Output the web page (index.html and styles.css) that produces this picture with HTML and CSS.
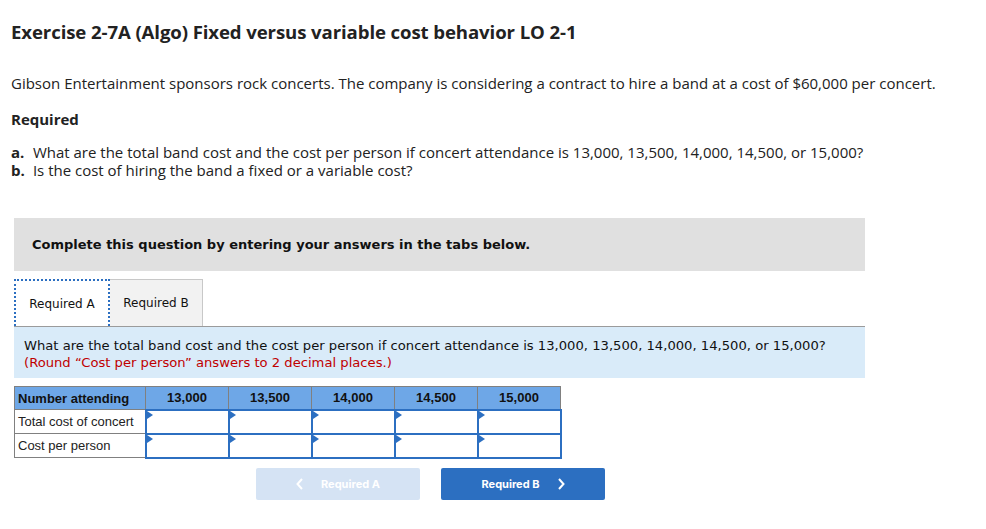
FILE: index.html
```html
<!DOCTYPE html>
<html>
<head>
<meta charset="utf-8">
<link rel="stylesheet" href="styles.css">
</head>
<body>
<div class="page">
  <h1 class="title">Exercise 2-7A (Algo) Fixed versus variable cost behavior LO 2-1</h1>
  <p class="intro">Gibson Entertainment sponsors rock concerts. The company is considering a contract to hire a band at a cost of $60,000 per concert.</p>
  <p class="req">Required</p>
  <ol class="parts">
    <li><b>a.</b> What are the total band cost and the cost per person if concert attendance is 13,000, 13,500, 14,000, 14,500, or 15,000?</li>
    <li><b>b.</b> Is the cost of hiring the band a fixed or a variable cost?</li>
  </ol>

  <div class="widget">
    <div class="banner">Complete this question by entering your answers in the tabs below.</div>
    <div class="tabs">
      <div class="tab active">Required A</div>
      <div class="tab">Required B</div>
    </div>
    <div class="question">
      What are the total band cost and the cost per person if concert attendance is 13,000, 13,500, 14,000, 14,500, or 15,000?<br>
      <span class="note">(Round “Cost per person” answers to 2 decimal places.)</span>
    </div>

    <table class="grid">
      <tr class="head">
        <th class="label">Number attending</th>
        <th>13,000</th><th>13,500</th><th>14,000</th><th>14,500</th><th>15,000</th>
      </tr>
      <tr>
        <td class="label">Total cost of concert</td>
        <td class="cell"><span class="flag"></span></td>
        <td class="cell"><span class="flag"></span></td>
        <td class="cell"><span class="flag"></span></td>
        <td class="cell"><span class="flag"></span></td>
        <td class="cell"><span class="flag"></span></td>
      </tr>
      <tr>
        <td class="label">Cost per person</td>
        <td class="cell"><span class="flag"></span></td>
        <td class="cell"><span class="flag"></span></td>
        <td class="cell"><span class="flag"></span></td>
        <td class="cell"><span class="flag"></span></td>
        <td class="cell"><span class="flag"></span></td>
      </tr>
    </table>

    <div class="nav">
      <button class="btn prev"><svg class="chev l" width="8" height="12" viewBox="0 0 8 12"><path d="M6 1 L1.5 6 L6 11" fill="none" stroke="#fff" stroke-width="2"/></svg>Required A</button>
      <button class="btn next">Required B<svg class="chev r" width="8" height="12" viewBox="0 0 8 12"><path d="M2 1 L6.5 6 L2 11" fill="none" stroke="#fff" stroke-width="2"/></svg></button>
    </div>
  </div>
</div>
</body>
</html>
```

FILE: styles.css
```css
* { box-sizing: border-box; }
body { margin: 0; background: #fff; color: #222; font-family: "Open Sans", "Liberation Sans", sans-serif; }
.page { padding: 20px 0 0 11px; }
.title { margin: 0; font-size: 18.6px; font-weight: 700; line-height: 24px; color: #222; letter-spacing: -0.1px; }
.intro { margin: 29px 0 0; font-size: 15px; line-height: 20px; }
.req { margin: 16px 0 0; font-size: 15px; font-weight: 700; line-height: 20px; }
.parts { list-style: none; margin: 14px 0 0; padding: 0; font-size: 15px; line-height: 18px; }
.parts li { margin-left: -11px; padding-left: 11px; }
.parts b { display: inline-block; width: 18px; }
.widget { margin-top: 39px; margin-left: 3px; width: 851px; font-family: "DejaVu Sans", Verdana, sans-serif; }
.banner { background: #e0e0e0; height: 53px; padding: 0 18px; display: flex; align-items: center; font-weight: 700; font-size: 13px; color: #111; }
.tabs { display: flex; margin-top: 8px; height: 47px; }
.tab { display: flex; align-items: center; justify-content: center; font-size: 12px; color: #111; }
.tab.active { width: 96px; border: 2px dotted #2c6fc1; border-bottom: none; background: #fff; }
.tab:not(.active) { width: 93px; background: #f2f2f2; border: 1px solid #c8c8c8; border-bottom: none; border-left: none; }
.question { background: #d9ebf9; border-top: 1px solid #9b9b9b; padding: 10px 10px 8px; font-size: 13.15px; line-height: 17px; color: #111; height: 52px; }
.note { color: #c00000; }
.grid { margin-top: 8px; border-collapse: collapse; font-family: "Liberation Sans", Arial, sans-serif; font-size: 13px; }
.grid th, .grid td { border: 1px solid #808080; padding: 0; height: 24px; }
.grid th { background: #6ea7e7; color: #111; font-weight: 700; width: 83px; text-align: center; height: 23px; }
.grid .label { width: 131px; text-align: left; padding-left: 3px; }
.grid td.label { background: #fff; }
.grid td.cell { position: relative; border: 2px solid #2c6fc1; }
.flag { position: absolute; left: 0; top: 0; width: 0; height: 0; border-top: 4px solid transparent; border-bottom: 4px solid transparent; border-left: 6px solid #2c6fc1; }
.nav { display: flex; gap: 21px; margin-top: 9px; margin-left: 242px; }
.btn { width: 164px; height: 32px; border: none; border-radius: 2px; font-family: "Inter", "Liberation Sans", sans-serif; font-size: 11px; font-weight: 700; color: #fff; display: flex; align-items: center; justify-content: center; padding: 0; }
.prev { background: #d5e3f4; }
.next { background: #2c6fc1; }
.chev.l { margin-right: 17px; }
.chev.r { margin-left: 17px; }
```
